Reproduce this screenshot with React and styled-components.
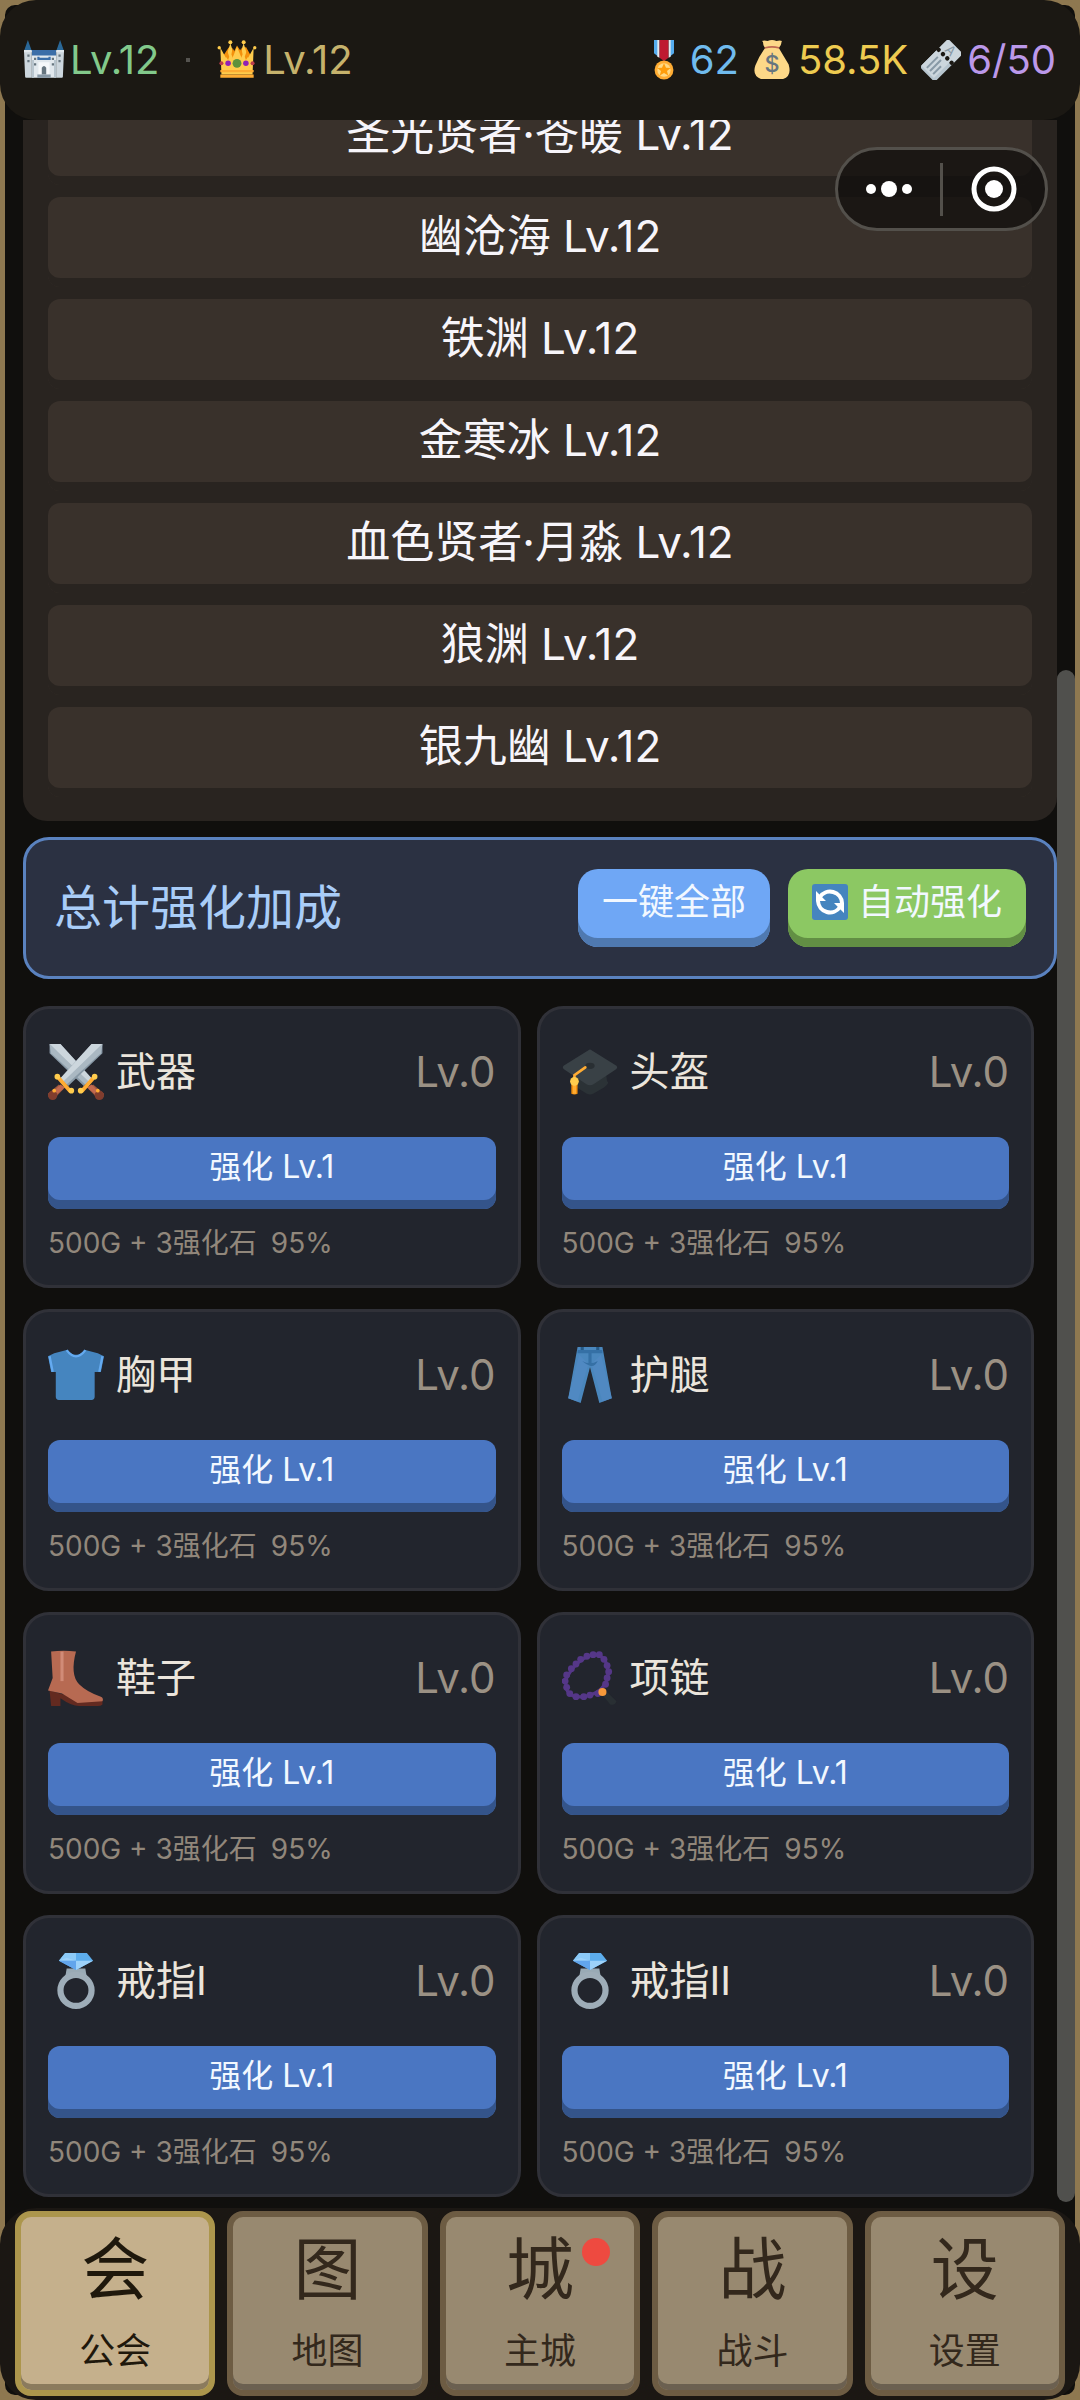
import React from 'react'
import styled, { createGlobalStyle } from 'styled-components'


const GlobalStyle = createGlobalStyle`
    * {
        box-sizing: border-box;
    }

    body {
        margin: 0;
        background: #8e7850;
        font-family: Inter, 'Noto Sans CJK SC', sans-serif;
    }

    button {
        font-family: inherit;
        cursor: pointer;
    }
`

const Shell = styled.div`
    display: flex;
    flex-direction: column;
    height: 100vh;
    border: 5px solid #8e7850;
    border-radius: 15px;
    background: #100f0d;
`

const Header = styled.header`
    flex: none;
    position: relative;
    display: flex;
    align-items: center;
    justify-content: space-between;
    height: 120px;
    margin: -5px -5px 0;
    padding: 0 24px;
    border-radius: 36px;
    background: #1b1813;
`

const Levels = styled.div`
    display: flex;
    align-items: center;
    gap: 27px;
`

const Wallet = styled.div`
    display: flex;
    align-items: center;
    gap: 13px;
`

const Stat = styled.div`
    display: flex;
    align-items: center;
    gap: 6px;
    color: ${props => props.$color};
    font-size: 40px;
    line-height: 48px;
`

const Dot = styled.span`
    width: 4px;
    height: 4px;
    background: #55534f;
`

const Icon = styled.svg`
    flex: none;
    width: ${props => props.$size}px;
    height: ${props => props.$size}px;
`

const Capsule = styled.div`
    position: absolute;
    top: 147px;
    right: 32px;
    z-index: 2;
    display: flex;
    align-items: center;
    width: 213px;
    height: 84px;
    border: 3px solid #53504b;
    border-radius: 42px;
    background: rgba(14, 13, 11, .7);
`

const CapsuleButton = styled.button`
    flex: 1;
    display: flex;
    justify-content: center;
    padding: 0;
    border: none;
    background: none;
`

const CapsuleLine = styled.span`
    width: 3px;
    height: 53px;
    background: #53504b;
`

const Body = styled.main`
    flex: 1;
    min-height: 0;
    display: flex;
    padding-left: 18px;
`

/* kept scrolled to its end, so the overflow goes up under the header */
const Content = styled.div`
    flex: 1;
    min-width: 0;
    display: flex;
    flex-direction: column;
    justify-content: flex-end;
    overflow: hidden;
    padding-bottom: 11px;
`

const Track = styled.div`
    flex: none;
    display: flex;
    align-items: flex-end;
    width: 18px;
    padding-bottom: 6px;
`

const Thumb = styled.div`
    width: 100%;
    height: 73.6%;
    border-radius: 9px;
    background: #50504d;
`

const Roster = styled.div`
    flex: none;
    display: flex;
    flex-direction: column;
    gap: 12px;
    margin-bottom: 16px;
    padding: 24px 25px;
    border-radius: 24px;
    background: #292420;
`

const Member = styled.button`
    flex: none;
    height: 90px;
    padding: 0 0 12px;
    border: none;
    border-radius: 12px;
    background: #39312b;
    box-shadow: inset 0 -9px 0 #292420;
    color: #f7f5fa;
    font-size: 44px;
    line-height: 52px;
`

const Summary = styled.section`
    flex: none;
    display: flex;
    align-items: center;
    gap: 18px;
    height: 142px;
    margin-bottom: 27px;
    padding: 0 28px;
    border: 3px solid #5a82bf;
    border-radius: 26px;
    background: #2b3142;
`

const SummaryTitle = styled.h2`
    flex: 1;
    margin: 0;
    color: #a9cdf8;
    font-size: 48px;
    font-weight: 400;
    line-height: 56px;
`

const ActionButton = styled.button`
    display: flex;
    align-items: center;
    gap: 10px;
    height: 78px;
    padding: 0 24px 12px;
    border: none;
    border-radius: 20px;
    background: ${props => props.$color};
    box-shadow: inset 0 -9px 0 ${props => props.$edge};
    color: #f2f8ff;
    font-size: 36px;
    line-height: 44px;
`

const Grid = styled.div`
    flex: none;
    display: grid;
    grid-template-columns: 1fr 1fr;
    gap: 21px 16px;
    margin-right: 23px;
`

const Card = styled.article`
    display: flex;
    flex-direction: column;
    height: 282px;
    padding: 31px 22px 0;
    border: 3px solid #303138;
    border-radius: 26px;
    background: #22252d;
`

const CardHead = styled.div`
    display: flex;
    align-items: center;
    gap: 12px;
    height: 64px;
`

const CardName = styled.h3`
    flex: 1;
    margin: 0;
    color: #ebe5dc;
    font-size: 40px;
    font-weight: 400;
    line-height: 48px;
`

const CardLevel = styled.span`
    color: #9b9184;
    font-size: 42px;
    line-height: 48px;
`

const Upgrade = styled.button`
    height: 72px;
    margin-top: 33px;
    padding: 0 0 12px;
    border: none;
    border-radius: 12px;
    background: #4a76c2;
    box-shadow: inset 0 -9px 0 #34548a;
    color: #f2f8ff;
    font-size: 32px;
    line-height: 40px;
`

const Cost = styled.p`
    display: flex;
    gap: 14px;
    margin: 14px 0 0;
    color: #91877b;
    font-size: 28px;
    line-height: 40px;
`

const Nav = styled.nav`
    flex: none;
    display: flex;
    gap: 12px;
    margin: 0 -5px -5px;
    padding: 3px 15px 4px;
    border-radius: 36px;
    background: #1b1713;
`

const NavButton = styled.button`
    position: relative;
    flex: 1;
    display: flex;
    flex-direction: column;
    align-items: center;
    height: 185px;
    padding: 8px 0 0;
    border: 6px solid ${props => props.$active ? '#ac964c' : '#6d5c43'};
    border-radius: 16px;
    background: ${props => props.$active ? '#c5b08c' : '#988970'};
    box-shadow: inset 0 -6px 0 ${props => props.$active ? '#8b7b5d' : '#6b6050'};
    color: ${props => props.$active ? '#1f180c' : '#33281c'};
`

const NavGlyph = styled.span`
    font-size: 68px;
    line-height: 88px;
`

const NavLabel = styled.span`
    margin-top: 16px;
    font-size: 36px;
    line-height: 44px;
`

const Badge = styled.span`
    position: absolute;
    top: 21px;
    right: 24px;
    width: 28px;
    height: 28px;
    border-radius: 50%;
    background: #ee4a40;
`


const Svg = ({ size, children }) => (
    <Icon viewBox="0 0 36 36" $size={size} aria-hidden="true">{children}</Icon>
)

const Castle = () => (
    <Svg size={40}>
        <path fill="#2a6797" d="M3.500 0 7 10H0zM32.500 0 36 10h-7z" />
        <path fill="#3b6ea8" d="M7 9h22v6H7z" />
        <path fill="#ccd6dd" d="M0 10h7v24H2q-1 0-1-1zM29 10h7l-1 23q0 1-1 1h-5z" />
        <path fill="#e1e8ed" d="M0 9h7v2H0zM29 9h7v2h-7zM7 14h22v20H7z" />
        <path fill="#3b6ea8" d="M12 15h2v1h8v-1h2v3H12z" />
        <path fill="#b8c5ce" d="M7 18h2v16H7zM27 18h2v16h-2z" />
        <path fill="#f5f8fa" d="M13 20h10v12H13z" />
        <path fill="#66757f" d="M16 25q2-3 4 0v6h-4zM3 13h2v2H3zM31 13h2v2h-2zM3 18h2v2H3zM31 18h2v2h-2zM9 16h2v2H9zM25 16h2v2h-2zM9 21h2v2H9zM25 21h2v2h-2z" />
        <path fill="#8899a6" d="M12 31h12v3H12z" />
    </Svg>
)

const Crown = () => (
    <Svg size={40}>
        <path fill="#f4900c" d="M5 15 11 6l4 5 3-6 4 6 4-5 5 9-2 13H7z" />
        <path fill="#ffcc4d" d="m4 31-1-24 5 9 4-13 4 12h4l4-12 4 13 5-9-1 24z" />
        <path fill="#f4900c" d="m8 15 1-6 2 6-1 3zM13 13l1-6 3 6-2 5zM19 13l3-6 1 6-2 5zM25 15l2-6 1 6-2 3z" />
        <path fill="#ffcc4d" d="m14 16 4-10 4 10v4h-8z" />
        <path fill="#ffac33" d="M3 27h30v2H3zM3 31h30v3H3z" />
        <g fill="#ffcc4d">
            <circle cx="2" cy="7" r="1.500" /><circle cx="12" cy="2" r="1.800" /><circle cx="24" cy="2" r="1.800" /><circle cx="34" cy="7" r="1.500" />
        </g>
        <circle cx="18" cy="21" r="4" fill="#5c913b" />
        <circle cx="10" cy="21" r="2.500" fill="#9122b5" /><circle cx="26" cy="21" r="2.500" fill="#9122b5" />
        <circle cx="4" cy="21" r="1.800" fill="#bc3d4c" /><circle cx="32" cy="21" r="1.800" fill="#bc3d4c" />
    </Svg>
)

const Medal = () => (
    <Svg size={40}>
        <path fill="#55acee" d="M9 0h4v15l-4-3zM23 0h4v12l-4 3z" />
        <path fill="#e1e8ed" d="M12 0h2v16l-2-1zM22 0h2v15l-2 1z" />
        <path fill="#be1931" d="M14 0h8v16l-4 3-4-3z" />
        <circle cx="18" cy="27" r="8.500" fill="#ffac33" />
        <circle cx="18" cy="27" r="6" fill="#ffd983" />
        <path fill="#ff9d0b" d="m18 21 1.800 4 4.200.3-3.300 2.700 1.100 4-3.800-2.200-3.800 2.200 1.100-4-3.300-2.700 4.200-.3z" />
    </Svg>
)

const MoneyBag = () => (
    <Svg size={40}>
        <path fill="#fdd888" d="M12 7C9 5 11 2 9 1q2-1 5 0 4-2 8 0 3-1 5 0c-1 1 0 4-3 6l9 15q3 11-5 13H8Q0 32 3 23q3-8 9-16z" />
        <path stroke="#bf6952" strokeWidth="1.500" strokeLinecap="round" d="M12 7q6-1.500 12 0" fill="none" />
        <text x="18" y="29" textAnchor="middle" fontSize="21" fontWeight="500" fill="#67757f">$</text>
    </Svg>
)

const Tickets = () => (
    <Svg size={40}>
        <g transform="rotate(-45 18 18)">
            <path fill="#b7c5cf" d="M2 9h20v19H2q-2 0-2-3V12q0-3 2-3z" />
            <path fill="#ccd6dd" d="M22 9h12q2 0 2 2v15q0 2-2 2H22zM2 9h21v16H2z" />
            <path stroke="#8899a6" strokeWidth="1.800" d="M4 14h14M4 18h14M4 22h10" />
            <g fill="#1b1813"><circle cx="23" cy="10" r="2" /><circle cx="23" cy="15.500" r="2" /><circle cx="23" cy="21" r="2" /><circle cx="23" cy="26.500" r="2" /></g>
            <text transform="rotate(90 30 18)" x="30" y="22" textAnchor="middle" fontSize="12" fill="#8899a6">A</text>
        </g>
    </Svg>
)

const Refresh = () => (
    <Svg size={36}>
        <rect width="36" height="36" rx="3" fill="#4585bf" />
        <path fill="none" stroke="#fff" strokeWidth="4" d="M8 13a12 12 0 0 1 22 6M28 23a12 12 0 0 1-22-6" />
        <path fill="#fff" d="M4 7v10h10zM32 29V19H22z" />
    </Svg>
)

const Blade = () => (
    <g>
        <path fill="#8899a6" d="M28 0h7v6L13 27l-5-5z" />
        <path fill="#ccd6dd" d="M28 0h7L10 25l-2-3z" />
        <path fill="#aab8c2" d="m35 0-1 6-22 20-2-2z" />
        <path fill="#a0583f" d="m7 26 3 3-6 6q-4 1-4-3z" />
        <path fill="#c1694f" d="m8 26 3 2-5 4-2-2z" />
        <circle cx="3" cy="33" r="3" fill="#803d2e" />
        <path stroke="#ffac33" strokeWidth="2.500" strokeLinecap="round" d="m7 22 7 8" />
        <circle cx="6" cy="21" r="1.800" fill="#ffcc4d" /><circle cx="15" cy="30" r="1.800" fill="#ffcc4d" /><circle cx="4" cy="30" r="1.200" fill="#ffac33" />
    </g>
)

const Swords = () => (
    <Svg size={56}>
        <g transform="translate(36 0) scale(-1 1)"><Blade /></g>
        <Blade />
    </Svg>
)

const Cap = () => (
    <Svg size={56}>
        <path fill="#2b3236" d="M8 17h20l1 7q2 1-2 4l-7 4q-2 1-4 0l-8-5z" />
        <path fill="#394146" d="m19 4 16 10q1 1 0 2L20 26q-2 1-4 0L1 16q-1-1 0-2L17 4q1-1 2 0z" />
        <ellipse cx="18" cy="14" rx="3" ry="2" fill="#292f33" />
        <path fill="none" stroke="#ffac33" strokeWidth="1.700" strokeLinecap="round" d="m15 15-7 5v6" />
        <path fill="#f4900c" d="M6 24h4v8q-2 1-4 0z" />
        <path fill="#ffac33" d="M7 26h2v6H7z" />
        <circle cx="8" cy="24" r="2.800" fill="#ffcc4d" />
    </Svg>
)

const Shirt = () => (
    <Svg size={56}>
        <path fill="#4585bf" d="M12 2q6 6 12 0l8 2 4 2-2 10h-4V32q0 2-2 2H7q-2 0-2-2V16H2L0 6l4-2z" />
        <path fill="none" stroke="#64aaf0" strokeWidth="1.500" d="M12 2q6 8 12 0M1 6l2 10M35 6l-2 10" />
    </Svg>
)

const Jeans = () => (
    <Svg size={56}>
        <path fill="#4a87bd" d="M10 0h16l6 33-8 3-6-23-6 23-8-3z" />
        <path fill="#5089c2" d="m11 5-7 28 6 2 7-24zM25 5l7 28-6 2-7-24z" />
        <path fill="#3570a5" d="M10 2h16v2H10zM17 4h2v7h-2zM13 9q5 3 10 0-2 4-5 3t-5-3z" />
        <path fill="#265b88" d="M12 0h2v2h-2zM22 0h2v2h-2z" />
    </Svg>
)

const Boot = () => (
    <Svg size={56}>
        <path fill="#632a20" d="m1 26 10 3 9 4 15-1v3q-1 1-3 1H20q-5 0-12-5v5H2z" />
        <path fill="#b76a52" d="M2 1q8-1 16 0-4 15 2 21 5 5 14 8 2 1 1 3l-16 1-10-6-9-2 3-8z" />
        <path fill="#d18b77" d="M8 1h2v19H8z" />
    </Svg>
)

const beads = [
    [20, 3], [24, 3], [27, 6], [29, 10], [30, 14], [29, 18], [28, 22], [23, 28], [18, 29], [14, 30], [9, 30],
    [5, 28], [3, 24], [2, 20], [3, 16], [6, 12], [9, 9], [12, 6], [16, 4]
]

const Beads = () => (
    <Svg size={56}>
        <path fill="none" stroke="#553788" strokeWidth="2" d="M20 3q7 0 9 7c2 9-2 18-15 20-10 1-13-4-11-12Q9 6 20 3z" />
        {beads.map(([x, y]) => <circle key={x + '-' + y} cx={x} cy={y} r="2.200" fill="#553788" />)}
        <path fill="#292f33" d="m26 29 3-2 6 6q-1 3-4 2z" />
        <circle cx="26" cy="27" r="2.600" fill="#f7993a" />
    </Svg>
)

const Ring = () => (
    <Svg size={56}>
        <path fill="#99aab5" d="m12 10 12 0 1 6H11z" />
        <circle cx="18" cy="24" r="10" fill="none" stroke="#9eadb8" strokeWidth="4" />
        <path fill="#5dadec" d="M11 0h14l4 5-11 6L7 5z" />
        <path fill="#8ccaf7" d="M11 0h7v5H7z" />
        <path fill="#9dd2fa" d="M18 5h11l-11 6zM7 5l5-2 6 2z" />
        <path fill="#62a5ec" d="M7 5h11v6z" />
    </Svg>
)


const members = ['圣光贤者·苍暖', '幽沧海', '铁渊', '金寒冰', '血色贤者·月淼', '狼渊', '银九幽']

const gear = [
    { name: '武器', icon: Swords },
    { name: '头盔', icon: Cap },
    { name: '胸甲', icon: Shirt },
    { name: '护腿', icon: Jeans },
    { name: '鞋子', icon: Boot },
    { name: '项链', icon: Beads },
    { name: '戒指I', icon: Ring },
    { name: '戒指II', icon: Ring }
]

const tabs = [
    { glyph: '会', label: '公会', active: true },
    { glyph: '图', label: '地图' },
    { glyph: '城', label: '主城', badge: true },
    { glyph: '战', label: '战斗' },
    { glyph: '设', label: '设置' }
]


export default function App() {
    return (
        <Shell>
            <GlobalStyle />

            <Header>
                <Levels>
                    <Stat $color="#82c98b"><Castle />Lv.12</Stat>
                    <Dot />
                    <Stat $color="#c6b26c"><Crown />Lv.12</Stat>
                </Levels>
                <Wallet>
                    <Stat $color="#70bbee"><Medal />62</Stat>
                    <Stat $color="#eecb50"><MoneyBag />58.5K</Stat>
                    <Stat $color="#bb98ea"><Tickets />6/50</Stat>
                </Wallet>
            </Header>

            <Capsule>
                <CapsuleButton aria-label="更多">
                    <svg width="46" height="18" viewBox="0 0 46 18" fill="#fff">
                        <circle cx="5" cy="9" r="5" />
                        <circle cx="23" cy="9" r="8" />
                        <circle cx="41" cy="9" r="5" />
                    </svg>
                </CapsuleButton>
                <CapsuleLine />
                <CapsuleButton aria-label="关闭">
                    <svg width="46" height="46" viewBox="0 0 46 46" fill="#fff">
                        <circle cx="23" cy="23" r="20" fill="none" stroke="#fff" strokeWidth="5" />
                        <circle cx="23" cy="23" r="9" />
                    </svg>
                </CapsuleButton>
            </Capsule>

            <Body>
                <Content>
                    <Roster>
                        {members.map(name => <Member key={name}>{name} Lv.12</Member>)}
                    </Roster>

                    <Summary>
                        <SummaryTitle>总计强化加成</SummaryTitle>
                        <ActionButton $color="#6fa7f5" $edge="#4f79b0">一键全部</ActionButton>
                        <ActionButton $color="#8cc863" $edge="#628f44"><Refresh />自动强化</ActionButton>
                    </Summary>

                    <Grid>
                        {gear.map(({ name, icon: GearIcon }) => (
                            <Card key={name}>
                                <CardHead>
                                    <GearIcon />
                                    <CardName>{name}</CardName>
                                    <CardLevel>Lv.0</CardLevel>
                                </CardHead>
                                <Upgrade>强化 Lv.1</Upgrade>
                                <Cost>
                                    <span>500G + 3强化石</span>
                                    <span>95%</span>
                                </Cost>
                            </Card>
                        ))}
                    </Grid>
                </Content>
                <Track>
                    <Thumb />
                </Track>
            </Body>

            <Nav>
                {tabs.map(tab => (
                    <NavButton key={tab.label} $active={tab.active}>
                        <NavGlyph>{tab.glyph}</NavGlyph>
                        <NavLabel>{tab.label}</NavLabel>
                        {tab.badge && <Badge />}
                    </NavButton>
                ))}
            </Nav>
        </Shell>
    )
}
